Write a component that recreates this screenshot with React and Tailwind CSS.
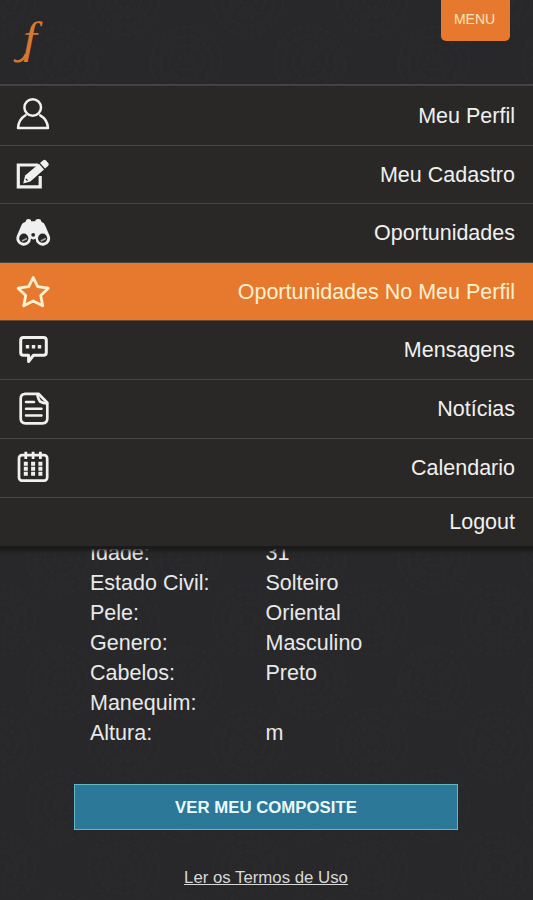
import React from "react";

const stroke = {
  fill: "none",
  stroke: "currentColor",
  strokeLinejoin: "round",
  strokeLinecap: "round",
};

function Icon({ children }) {
  return (
    <svg viewBox="0 0 40 40" className="h-10 w-10 shrink-0" aria-hidden="true">
      {children}
    </svg>
  );
}

const UserIcon = () => (
  <Icon>
    <g {...stroke} strokeWidth="2.5">
      <circle cx="19.7" cy="11.5" r="8.3" />
      <path d="M12.5 19.3C8 22 5.4 26 5 32H35C34.6 26 32 22 27.2 19.3" />
    </g>
  </Icon>
);

const EditIcon = () => (
  <Icon>
    <path d="M25 10H5.3V31.8H27.2V21" fill="none" stroke="currentColor" strokeWidth="3.2" />
    <path d="M10.2 28.4L12.1 20.5L26 8.8L31 14.5L17.4 26.6Z" fill="currentColor" />
    <path d="M27 7.9L30.2 5.2Q31.7 4.2 33 5.6L35.4 8.3Q36.4 9.8 35 11L32 13.6Z" fill="currentColor" />
    <path d="M12.8 23.8L14.6 25.6" stroke="#292827" strokeWidth="1.2" />
  </Icon>
);

const BinocularsIcon = () => (
  <Icon>
    <path
      d="M13.5 6.5Q16 5.5 18 7V8.3H22.4V7Q25 5.5 27.5 6.5L28.6 9Q31.4 9.6 32.4 13L36.5 22.5A7.3 7.3 0 1 1 22.5 25.5Q20.3 27.5 18 25.5A7.3 7.3 0 1 1 4 22.5L8.1 13Q9.2 9.6 12.4 9Z"
      fill="currentColor"
    />
    <g fill="#292827">
      <circle cx="10.8" cy="25.2" r="4.6" />
      <circle cx="29.6" cy="25.2" r="4.6" />
      <circle cx="20.2" cy="21.8" r="1.9" />
    </g>
    <path d="M9 28L14 25.5M27.8 28L32.8 25.5" stroke="#aaa" strokeWidth="1.4" />
  </Icon>
);

const StarIcon = () => (
  <Icon>
    <path
      {...stroke}
      strokeWidth="2.8"
      d="M20.2 5.5L24.7 14.6L35.3 16.2L27.7 23.5L29.7 33.8L20.2 29L10.7 33.8L12.7 23.5L5.1 16.2L15.7 14.6Z"
    />
  </Icon>
);

const MessageIcon = () => (
  <Icon>
    <path
      {...stroke}
      strokeWidth="3"
      d="M10.5 7.5H30.5Q33.3 7.5 33.3 10.3V22.5Q33.3 25.3 30.5 25.3H20.5L15.6 31.5V25.3H10.5Q7.7 25.3 7.7 22.5V10.3Q7.7 7.5 10.5 7.5Z"
    />
    <path d="M12.8 16.7H16.2M18.8 16.7H22.2M24.8 16.7H28.2" stroke="currentColor" strokeWidth="3.4" />
  </Icon>
);

const NewsIcon = () => (
  <Icon>
    <g {...stroke} strokeWidth="2.7">
      <path d="M12 4.8H25.5L34.3 13.8V29.5Q34.3 34.3 29.5 34.3H12.5Q7.7 34.3 7.7 29.5V9.6Q7.7 4.8 12.5 4.8Z" />
      <path d="M24.3 5.5Q25 9.5 27 12.5Q30 14.2 34 14.4" />
      <path d="M13 13H21M13 19.8H28.5M13 26.6H28.5" strokeWidth="2.5" />
    </g>
  </Icon>
);

const CalendarIcon = () => (
  <Icon>
    <rect x="6" y="7.2" width="28.2" height="25.4" rx="3" {...stroke} strokeWidth="2.7" />
    <path d="M12.8 3.8V11M20.1 3.8V11M27.4 3.8V11" stroke="currentColor" strokeWidth="2.8" />
    <path
      d="M10.8 15.8H14.8M18.1 15.8H22.1M25.4 15.8H29.4M10.8 20.8H14.8M18.1 20.8H22.1M25.4 20.8H29.4M10.8 25.8H14.8M18.1 25.8H22.1M25.4 25.8H29.4"
      stroke="currentColor"
      strokeWidth="4"
    />
  </Icon>
);

const menu = [
  { label: "Meu Perfil", icon: UserIcon, height: "h-[60px]" },
  { label: "Meu Cadastro", icon: EditIcon, height: "h-[58px]" },
  { label: "Oportunidades", icon: BinocularsIcon, height: "h-[59px]" },
  { label: "Oportunidades No Meu Perfil", icon: StarIcon, height: "h-[58px]", active: true },
  { label: "Mensagens", icon: MessageIcon, height: "h-[59px]" },
  { label: "Notícias", icon: NewsIcon, height: "h-[59px]" },
  { label: "Calendario", icon: CalendarIcon, height: "h-[59px]" },
];

const profile = [
  ["Idade:", "31"],
  ["Estado Civil:", "Solteiro"],
  ["Pele:", "Oriental"],
  ["Genero:", "Masculino"],
  ["Cabelos:", "Preto"],
  ["Manequim:", ""],
  ["Altura:", "m"],
];

// Faint overlapping ring texture behind the page.
function Texture() {
  return (
    <svg className="absolute inset-0 h-full w-full" aria-hidden="true">
      <defs>
        <pattern id="rings" width="124" height="124" patternUnits="userSpaceOnUse">
          <g fill="none" stroke="#3a393b" strokeWidth="1.2" strokeDasharray="3 4" opacity="0.25">
            {[8, 17, 26, 35].map((r) => (
              <React.Fragment key={r}>
                <circle cx="62" cy="62" r={r} />
                <circle cx="0" cy="0" r={r} />
                <circle cx="124" cy="0" r={r} />
                <circle cx="0" cy="124" r={r} />
                <circle cx="124" cy="124" r={r} />
              </React.Fragment>
            ))}
          </g>
        </pattern>
      </defs>
      <rect width="100%" height="100%" fill="url(#rings)" />
    </svg>
  );
}

export default function App() {
  return (
    <div className="relative flex h-[900px] w-[533px] flex-col overflow-hidden bg-[#28282a] font-['Liberation_Sans',Arial,sans-serif] text-[21.5px] text-[#e9e9e9]">
      <Texture />
      <header className="relative flex h-[86px] shrink-0 items-start justify-between border-b-2 border-[#4c4b4e] pr-[23px]">
        <svg viewBox="0 0 60 80" className="h-20 w-[60px]">
          <text
            transform="translate(23 53) scale(1.1 1)"
            fontFamily="Liberation Serif"
            fontStyle="italic"
            fontSize="45"
            fill="#d8772f"
          >
            f
          </text>
          {/* Swash foot of the logo */}
          <path
            d="M25.4 55Q23.4 59.8 19.8 61Q17 61.9 14.8 60.6"
            fill="none"
            stroke="#d8772f"
            strokeWidth="2.4"
            strokeLinecap="round"
          />
        </svg>
        <button className="h-[41px] w-[69px] rounded-b-[5px] bg-[#e6792d] pr-[2px] pb-[2px] text-[14px] text-[#fbe3bd]">
          MENU
        </button>
      </header>

      <nav className="relative z-10 shrink-0 bg-[#292827] shadow-[0_3px_0_#1b1b1b,0_3px_4px_2px_#1b1b1b]">
        {menu.map(({ label, icon: Glyph, height, active }) => (
          <a
            key={label}
            className={`flex items-center justify-between border-b pr-[18px] pl-[13px] ${height} ${
              active
                ? "border-[#6b4630] bg-[#e6792d] text-[#fff0cf]"
                : "border-[#464544] text-[#f0f0f0]"
            }`}
          >
            <Glyph />
            <span className="pt-px">{label}</span>
          </a>
        ))}
        <a className="flex h-12 items-center justify-end pr-[18px] text-[#f0f0f0]">Logout</a>
      </nav>

      <main className="relative -mt-[8px] flex flex-col">
        <dl className="pl-[90px]">
          {profile.map(([name, value]) => (
            <div key={name} className="flex h-[30px] items-center">
              <dt className="w-[175.5px]">{name}</dt>
              <dd>{value}</dd>
            </div>
          ))}
        </dl>
        <button className="mt-[36px] ml-[74px] h-[46px] w-[384px] border border-[#62b9c4] bg-[#2b7898] pt-px text-[16.8px] font-bold text-[#eafaff]">
          VER MEU COMPOSITE
        </button>
        <a className="mt-[38px] mr-px self-center text-[16.8px] leading-5 text-[#d9d9d9] underline">
          Ler os Termos de Uso
        </a>
      </main>
    </div>
  );
}
